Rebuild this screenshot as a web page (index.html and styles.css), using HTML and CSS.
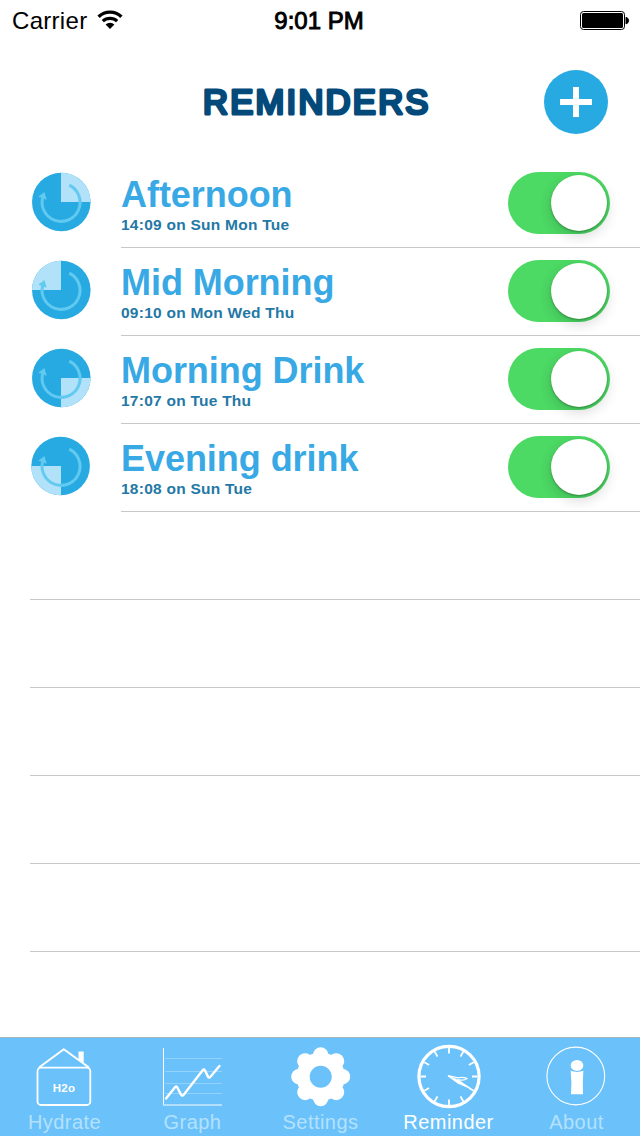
FILE: index.html
```
<!DOCTYPE html>
<html lang="en">
  <head>
    <meta charset="UTF-8" />
    <meta name="viewport" content="width=device-width, initial-scale=1.0" />
    <title>Reminders</title>
    <link rel="stylesheet" href="styles.css">
  </head>
  <body>
    <div class="container">
      <!-- Status bar -->
      <div class="status-bar">
        <div class="carrier">
          <span>Carrier</span>
          <svg width="26" height="20" viewBox="0 0 26 20">
            <path d="M1.6 6.8a16.2 16.2 0 0 1 22.8 0" fill="none" stroke="#000" stroke-width="3.4" />
            <path d="M5.8 11.2a10.6 10.6 0 0 1 14.4 0" fill="none" stroke="#000" stroke-width="3.2" />
            <path d="M13 19l-4.4-4.4a6.4 6.4 0 0 1 8.8 0z" />
          </svg>
        </div>
        <div class="time">9:01 PM</div>
        <svg class="battery" width="50" height="20" viewBox="0 0 50 20">
          <rect x="0.5" y="0.5" width="44" height="18" rx="3" fill="none" stroke="#000" />
          <rect x="2" y="2" width="41" height="15" rx="1.5" />
          <path d="M46 6.3a3.4 3.4 0 0 1 0 6.6z" stroke="#000" />
        </svg>
      </div>

      <!-- Header -->
      <header>
        <h1>
          <svg width="240" height="44" viewBox="0 0 240 44">
            <text x="120.8" y="35.8">REMINDERS</text>
          </svg>
        </h1>
        <button class="add-btn">
          <svg width="32" height="30" viewBox="0 0 32 30">
            <path d="M0 15h32M16 0v30" stroke="#fff" stroke-width="6" />
          </svg>
        </button>
      </header>

      <!-- Reminder list -->
      <svg class="defs">
        <g id="arrow" stroke="none">
          <path d="M38.3 13.2A19 19 0 1 1 11.7 25.5" fill="none" stroke="#62c9f1" stroke-width="3" />
          <path d="M7.3 24.8L13.4 20L15.8 27.8z" fill="#62c9f1" />
        </g>
      </svg>
      <div class="reminder-list">
        <div class="reminder-row">
          <svg class="pie" viewBox="0 0 60 60">
            <circle cx="30.3" cy="30" r="29.3" />
            <path class="slice" d="M30 30V0.7A29.3 29.3 0 0 1 59.6 30z" />
            <use href="#arrow" />
          </svg>
          <div class="reminder-info">
            <div>
              <div class="name">Afternoon</div>
              <div class="when">14:09 on Sun Mon Tue</div>
            </div>
            <div class="switch"><div class="knob"></div></div>
          </div>
        </div>
        <div class="reminder-row">
          <svg class="pie" viewBox="0 0 60 60">
            <circle cx="30.3" cy="30" r="29.3" />
            <path class="slice" d="M30 30H1A29.3 29.3 0 0 1 30 0.7z" />
            <use href="#arrow" />
          </svg>
          <div class="reminder-info">
            <div>
              <div class="name">Mid Morning</div>
              <div class="when">09:10 on Mon Wed Thu</div>
            </div>
            <div class="switch"><div class="knob"></div></div>
          </div>
        </div>
        <div class="reminder-row">
          <svg class="pie" viewBox="0 0 60 60">
            <circle cx="30.3" cy="30" r="29.3" />
            <path class="slice" d="M30 30H59.6A29.3 29.3 0 0 1 30 59.3z" />
            <use href="#arrow" />
          </svg>
          <div class="reminder-info">
            <div>
              <div class="name">Morning Drink</div>
              <div class="when">17:07 on Tue Thu</div>
            </div>
            <div class="switch"><div class="knob"></div></div>
          </div>
        </div>
        <div class="reminder-row">
          <svg class="pie" viewBox="0 0 60 60">
            <circle cx="29.6" cy="30" r="29.3" />
            <path class="slice" d="M30 30V59.3A29.3 29.3 0 0 1 0.3 30z" />
            <use href="#arrow" />
          </svg>
          <div class="reminder-info">
            <div>
              <div class="name">Evening drink</div>
              <div class="when">18:08 on Sun Tue</div>
            </div>
            <div class="switch"><div class="knob"></div></div>
          </div>
        </div>
        <div class="empty-row"></div>
        <div class="empty-row"></div>
        <div class="empty-row"></div>
        <div class="empty-row"></div>
        <div class="empty-row"></div>
      </div>

      <!-- Tab bar -->
      <nav>
        <div class="tab">
          <svg viewBox="0 0 128 72" fill="none" stroke="#fff">
            <rect x="37.5" y="30.7" width="52.8" height="37.3" rx="3.5" stroke-width="1.8" />
            <path d="M39 30.5L63.8 12.3L89 30.5" stroke-width="2" stroke-linejoin="round" />
            <path d="M78.5 14.5h5.2v12l-5.2-3.8z" fill="#fff" stroke="none" />
            <text x="64" y="54.8" class="h2o">H2o</text>
          </svg>
          <span>Hydrate</span>
        </div>
        <div class="tab">
          <svg viewBox="0 0 128 72" fill="none" stroke="#fff">
            <path d="M37 21.5h57M37 34.5h57M37 46.5h57M37 56.5h57" stroke="#93d2fc" />
            <path d="M35.5 11v57" />
            <path d="M35 68h59" stroke="#c9e8fe" stroke-width="1.6" />
            <path d="M38 61.5L47 50.2Q48.3 48.6 49.3 50.5L53 57.6Q54 59.8 55.7 57.8L74.5 33.4Q76 31.5 77 33.6L80 39.6Q81 41.5 82.5 39.8L91.4 29" stroke-width="2.4" stroke-linecap="round" />
          </svg>
          <span>Graph</span>
        </div>
        <div class="tab">
          <svg viewBox="0 0 128 72" fill="#fff">
            <circle cx="64.7" cy="39.7" r="17.6" fill="none" stroke="#fff" stroke-width="13.2" />
            <circle cx="64.7" cy="17.8" r="7.6" />
            <circle cx="80.2" cy="24.2" r="8" />
            <circle cx="86.6" cy="39.7" r="7.6" />
            <circle cx="80.2" cy="55.2" r="8" />
            <circle cx="64.7" cy="61.6" r="7.6" />
            <circle cx="49.2" cy="55.2" r="8" />
            <circle cx="42.8" cy="39.7" r="7.6" />
            <circle cx="49.2" cy="24.2" r="8" />
          </svg>
          <span>Settings</span>
        </div>
        <div class="tab active">
          <svg viewBox="0 0 128 72" fill="none" stroke="#fff">
            <circle cx="65" cy="39.5" r="30.1" stroke-width="3.2" />
            <g stroke-width="1.8">
              <path id="tick" d="M65 11v5.5M65 62.5v5.5" />
              <use href="#tick" transform="rotate(30 65 39.5)" />
              <use href="#tick" transform="rotate(60 65 39.5)" />
              <use href="#tick" transform="rotate(90 65 39.5)" />
              <use href="#tick" transform="rotate(120 65 39.5)" />
              <use href="#tick" transform="rotate(150 65 39.5)" />
            </g>
            <path d="M64 38.6L74 40.8Q79 39.5 83 41.6Q80 44 74 42.6" stroke-width="1.2" />
            <path d="M64 38.8L75 43.7L86 51.2L74 46z" fill="#fff" stroke-width="1.2" />
          </svg>
          <span>Reminder</span>
        </div>
        <div class="tab">
          <svg viewBox="0 0 128 72" fill="#fff">
            <circle cx="63.8" cy="39" r="28.9" fill="none" stroke="#fff" stroke-width="1.1" />
            <ellipse cx="65" cy="28.4" rx="6.3" ry="5.5" />
            <path d="M58.6 33.8Q65 36 71.4 33.8L70.8 45L71 57.3H59L59.4 45z" />
          </svg>
          <span>About</span>
        </div>
      </nav>
    </div>
  </body>
</html>
```
FILE: styles.css
```
body {
  margin: 0;
  padding: 0;
  font-family: "Liberation Sans", Arial, sans-serif;
  background-color: white;
}

.container {
  display: flex;
  flex-direction: column;
  width: 640px;
  height: 1136px;
  overflow: hidden;
}

/* status bar */
.status-bar {
  display: grid;
  grid-template-columns: 1fr auto 1fr;
  align-items: center;
  box-sizing: border-box;
  height: 40px;
  padding: 2px 10px 0 12px;
  font-size: 24px;
  line-height: 38px;
}
.carrier {
  display: flex;
  align-items: center;
  gap: 10px;
  letter-spacing: 0.3px;
}
.carrier svg {
  margin-bottom: 2px;
}
.time {
  margin: 0 4px 0 0;
  -webkit-text-stroke: 0.9px #000;
}
.battery {
  justify-self: end;
}

/* header */
header {
  display: grid;
  grid-template-columns: 1fr auto 1fr;
  align-items: center;
  height: 120px;
  padding: 0 32px 0 24px;
}
header h1 {
  grid-column: 2;
  margin: 0;
}
h1 svg {
  display: block;
}
h1 text {
  font-size: 34.5px;
  font-weight: normal;
  letter-spacing: 2.3px;
  text-anchor: middle;
  fill: #034a7b;
  stroke: #034a7b;
  stroke-width: 3.2px;
  stroke-linejoin: round;
}
.add-btn {
  display: flex;
  justify-content: center;
  align-items: center;
  justify-self: end;
  width: 64px;
  height: 64px;
  margin-top: 4px;
  padding: 0;
  border: none;
  border-radius: 50%;
  background-color: #27aae1;
}

/* list */
.defs {
  display: none;
}
.reminder-list {
  flex: 1;
}
.reminder-row {
  display: flex;
  height: 88px;
  padding-left: 31px;
}
.pie {
  width: 60px;
  height: 60px;
  margin: 12px 30px 0 0;
  fill: #27aae1;
}
.slice {
  fill: #b2e2f9;
}
.reminder-info {
  flex: 1;
  display: flex;
  justify-content: space-between;
  box-sizing: border-box;
  padding: 12px 30px 0 0;
  border-bottom: 1px solid #c8c7cc;
  font-weight: bold;
}
.name {
  padding-top: 2px;
  font-size: 36px;
  line-height: 42px;
  letter-spacing: -0.05px;
  color: #38a9e4;
}
.when {
  font-size: 15.5px;
  line-height: 18px;
  letter-spacing: 0.25px;
  color: #2478a5;
}
.switch {
  display: flex;
  justify-content: flex-end;
  box-sizing: border-box;
  width: 102px;
  height: 62px;
  padding: 3px;
  border-radius: 31px;
  background-color: #4cd964;
}
.knob {
  width: 56px;
  height: 56px;
  border-radius: 50%;
  background-color: white;
  box-shadow: 0 1px 2px rgba(0, 0, 0, 0.3), 0 5px 14px rgba(0, 0, 0, 0.16);
}
.empty-row {
  box-sizing: border-box;
  height: 88px;
  margin-left: 30px;
  border-bottom: 1px solid #c8c7cc;
}

/* tab bar */
nav {
  display: flex;
  height: 99px;
  background-color: #6bc1fa;
  box-shadow: inset 0 1px 0 #a5b5bd;
}
.tab {
  width: 128px;
  text-align: center;
  font-size: 20px;
  letter-spacing: 0.45px;
  color: #b3e1fd;
}
.tab svg {
  display: block;
  width: 128px;
  height: 72px;
}
.tab span {
  display: block;
  padding-left: 1px;
  line-height: 26px;
}
.active {
  color: white;
}
.h2o {
  font-size: 11.5px;
  font-weight: bold;
  letter-spacing: 0.3px;
  text-anchor: middle;
  fill: white;
  stroke: none;
}
```
